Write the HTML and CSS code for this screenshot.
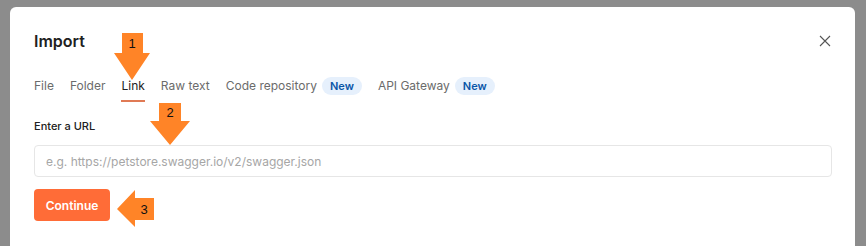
FILE: index.html
```html
<!DOCTYPE html>
<html lang="en">
<head>
<meta charset="utf-8">
<title>Import</title>
<link rel="stylesheet" href="styles.css">
</head>
<body>
  <div class="modal">
    <div class="modal-header">
      <div class="modal-title">Import</div>
      <button class="close-btn" aria-label="Close">
        <svg width="12" height="12" viewBox="0 0 12 12"><path d="M1 1L11 11M11 1L1 11" stroke="#555" stroke-width="1.1" fill="none"/></svg>
      </button>
    </div>
    <div class="tabs">
      <div class="tab">File</div>
      <div class="tab">Folder</div>
      <div class="tab active">Link</div>
      <div class="tab">Raw text</div>
      <div class="tab">Code repository <span class="badge">New</span></div>
      <div class="tab">API Gateway <span class="badge">New</span></div>
    </div>
    <label class="field-label">Enter a URL</label>
    <input class="url-input" type="text" placeholder="e.g. https://petstore.swagger.io/v2/swagger.json">
    <button class="primary-btn">Continue</button>
  </div>

  <!-- annotation arrows -->
  <svg class="callout callout-1" width="36" height="48" viewBox="0 0 36 48">
    <path d="M8 0H29V20H36L18 47L0 20H8Z" fill="#ff8427"/>
    <text x="18" y="15" text-anchor="middle">1</text>
  </svg>
  <svg class="callout callout-2" width="40" height="43" viewBox="0 0 40 43">
    <path d="M9 0H31V18H40L20 42L0 18H9Z" fill="#ff8427"/>
    <text x="20" y="14" text-anchor="middle">2</text>
  </svg>
  <svg class="callout callout-3" width="37" height="37" viewBox="0 0 37 37">
    <path d="M0 19L18 0V8H37V30H18V37Z" fill="#ff8427"/>
    <text x="27" y="24" text-anchor="middle">3</text>
  </svg>
</body>
</html>
```

FILE: styles.css
```css
body { margin:0; background:#8c8c8c; font-family: Inter, "Noto Sans", sans-serif; overflow:hidden; height:246px; position:relative; }

.modal {
  margin: 7px 0 0 10px; width: 845px; height: 239px;
  background: #fff; border-radius: 6px 6px 0 0;
  padding: 24px 23px 0 24px; box-sizing: border-box;
  display: flex; flex-direction: column; align-items: flex-start;
}
.modal-header { display:flex; justify-content:space-between; align-items:center; align-self:stretch; }
.modal-title { font-size:16px; line-height:20px; font-weight:600; color:#212121; }
.close-btn {
  border:0; background:none; padding:0; margin-right:-3px; width:20px; height:20px;
  display:flex; align-items:center; justify-content:center; cursor:pointer;
}

.tabs { display:flex; gap:16px; margin-top:25px; }
.tab {
  font-size:12px; line-height:20px; color:#6b6b6b; padding-bottom:4px;
  border-bottom:2px solid transparent; display:flex; align-items:center; gap:5px;
}
.tab.active { color:#212121; border-bottom-color:#e07a55; }
.badge {
  background:#e6f0fc; color:#0b56a8; font-size:11px; font-weight:600;
  line-height:18px; padding:0 8px; border-radius:9px;
}

.field-label { font-size:11px; line-height:16px; color:#212121; margin-top:16px; font-weight:500; }
.url-input {
  margin-top:11px; align-self:stretch; height:32px; box-sizing:border-box;
  border:1px solid #e6e6e6; border-radius:4px; padding:0 11px;
  font:12px Inter, "Noto Sans", sans-serif; color:#212121; outline:none;
}
.url-input::placeholder { color:#a6a6a6; }
.primary-btn {
  margin-top:12px; height:32px; width:76px; border:0; border-radius:4px;
  background:#ff6c37; color:#fff; font:600 12px Inter, "Noto Sans", sans-serif;
}

.callout { position:absolute; }
.callout text { font: 13px "Liberation Sans", Arial, sans-serif; fill:#111; }
.callout-1 { left:114px; top:33px; }
.callout-2 { left:150px; top:103px; }
.callout-3 { left:117px; top:190px; }
```
